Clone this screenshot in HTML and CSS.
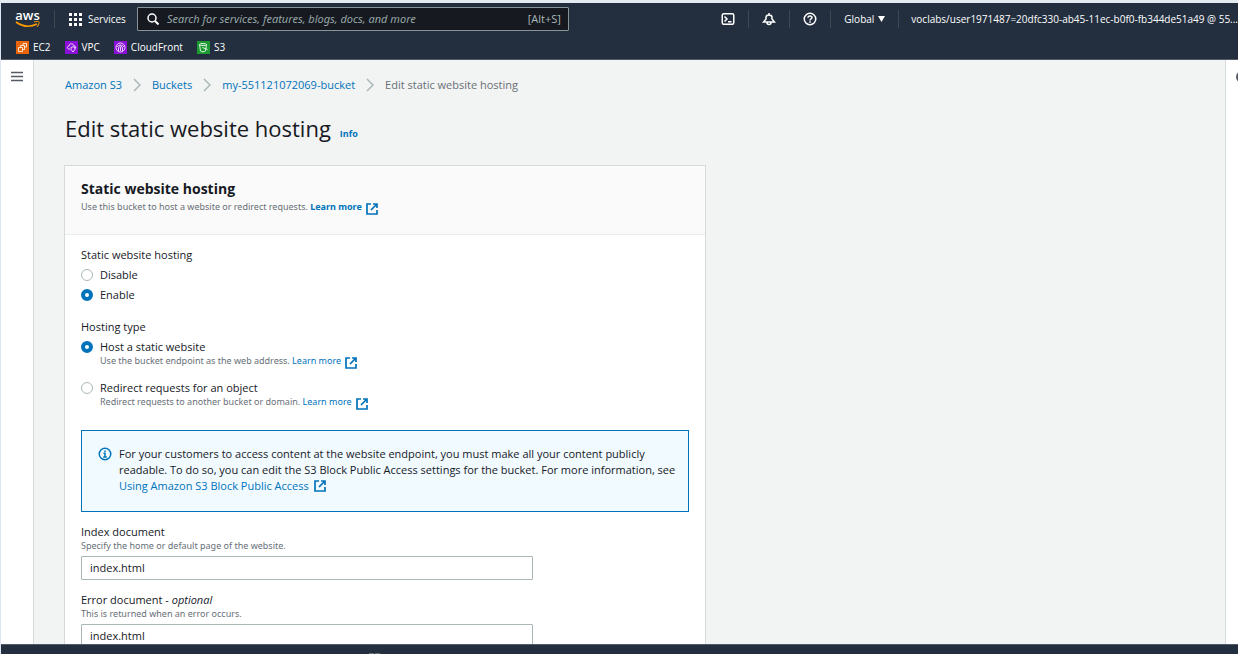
FILE: index.html
```html
<!DOCTYPE html>
<html lang="en">
<head>
<meta charset="utf-8">
<meta name="viewport" content="width=device-width, initial-scale=1">
<title>Edit static website hosting</title>
<link rel="stylesheet" href="styles.css">
</head>
<body>
<svg class="defs" aria-hidden="true">
  <symbol id="external" viewBox="0 0 12 12">
    <path d="M5 1H1v10h10V7M7 1h4v4M11 1 5 7" fill="none" stroke="currentColor" stroke-width="1.700"/>
  </symbol>
  <symbol id="chevron" viewBox="0 0 8 14">
    <path d="M1 1l6 6-6 6" fill="none" stroke="currentColor" stroke-width="1.500"/>
  </symbol>
</svg>
<div class="app">
  <header class="topbar">
    <div class="topbar-row">
      <a class="logo" href="#" aria-label="AWS home">
        <span class="logo-word">aws</span>
        <svg class="logo-smile" viewBox="0 0 26 7"><path d="M1 1c7 5 15 5 21 2" fill="none" stroke="#f90" stroke-width="1.700"/><path d="M19 1c3-1 6-1 5 1 0 1-1 3-2 4" fill="none" stroke="#f90" stroke-width="1"/></svg>
      </a>
      <button class="services" type="button">
        <svg class="icon-grid" viewBox="0 0 13 13" fill="#fff"><path d="M0 0h3v3H0zM5 0h3v3H5zM10 0h3v3h-3zM0 5h3v3H0zM5 5h3v3H5zM10 5h3v3h-3zM0 10h3v3H0zM5 10h3v3H5zM10 10h3v3h-3z"/></svg>
        Services
      </button>
      <div class="search">
        <svg class="icon-search" viewBox="0 0 12 12"><circle cx="5" cy="5" r="4" fill="none" stroke="#fff" stroke-width="1.500"/><path d="M8 8l3.500 3.500" stroke="#fff" stroke-width="2"/></svg>
        <input class="search-input" type="search" aria-label="Search" placeholder="Search for services, features, blogs, docs, and more">
        <span class="search-key">[Alt+S]</span>
      </div>
      <nav class="tools" aria-label="Account">
        <button class="tool" type="button" aria-label="CloudShell"><svg class="icon-tool" viewBox="0 0 14 14" fill="none" stroke="#fff" stroke-width="1.500"><rect x="1.250" y="1.750" width="11.500" height="10.500" rx="1.500"/><path d="M3.500 4.500 6 7 3.500 9.500M7 9.750h3.500"/></svg></button>
        <button class="tool" type="button" aria-label="Notifications"><svg class="icon-tool" viewBox="0 0 14 14" fill="none" stroke="#fff" stroke-width="1.500"><path d="M1.500 10h11L10 7V5.500C10 4 8.500 3 7 3S4 4 4 5.500V7zM7 1v2M5 10.500a2 2 0 0 0 4 0"/></svg></button>
        <button class="tool" type="button" aria-label="Help"><svg class="icon-tool" viewBox="0 0 14 14" fill="none" stroke="#fff" stroke-width="1.500"><circle cx="7" cy="7" r="5.750"/><path d="M5 5.800C5 3.500 9 3.500 9 5.600 9 7 7 6.800 7 8.400M7 9.300v1.400"/></svg></button>
        <button class="tool region" type="button">Global <svg class="caret" viewBox="0 0 7 6"><path d="M0 0h7L3.500 6z" fill="#fff"/></svg></button>
        <button class="tool account" type="button">voclabs/user1971487=20dfc330-ab45-11ec-b0f0-fb344de51a49 @ 55... <svg class="caret" viewBox="0 0 7 6"><path d="M0 0h7L3.500 6z" fill="#fff"/></svg></button>
      </nav>
    </div>
    <nav class="favorites" aria-label="Favorites">
      <a class="favorite" href="#"><svg class="fav ec2" viewBox="0 0 13 13" fill="none" stroke="#fff" stroke-opacity=".8"><path d="M2.500 6.500h4v4h-4zM4.500 6.500v-2h4v4h-2M7 4.500v-2h3.500V6h-2"/></svg>EC2</a>
      <a class="favorite" href="#"><svg class="fav purple" viewBox="0 0 13 13" fill="none" stroke="#fff" stroke-opacity=".8"><path d="M5 8H3.500C1.500 7 2.500 5 4 5c0-3 4.500-3 5 0 2 0 2 2 1 2.500M6 6.500l2-.8 2 .8v2L8 11 6 8.500z"/></svg>VPC</a>
      <a class="favorite" href="#"><svg class="fav purple" viewBox="0 0 13 13" fill="none" stroke="#fff" stroke-opacity=".8"><circle cx="6.500" cy="6.500" r="4.500"/><path d="M3 6c1-2 5-3 7 0M4.500 10V6.500L6.500 5l2 1.500V10M6.500 6v4"/></svg>CloudFront</a>
      <a class="favorite" href="#"><svg class="fav s3" viewBox="0 0 13 13" fill="none" stroke="#fff" stroke-opacity=".85"><ellipse cx="6" cy="3.500" rx="3.500" ry="1"/><path d="M2.500 3.500l1 6.500c1 1 4 1 5 0l1-6.500M5.500 6.500l5 2"/></svg>S3</a>
    </nav>
  </header>
  <div class="body">
    <aside class="rail"><button class="menu" type="button" aria-label="Open navigation"><svg class="icon-menu" viewBox="0 0 12 11"><path d="M0 1.500h12M0 5.500h12M0 9.500h12" stroke="#545b64" stroke-width="1.500"/></svg></button></aside>
    <main class="content">
      <nav class="crumbs" aria-label="Breadcrumb">
        <a href="#">Amazon S3</a><svg class="chevron"><use href="#chevron"/></svg>
        <a href="#">Buckets</a><svg class="chevron"><use href="#chevron"/></svg>
        <a href="#">my-551121072069-bucket</a><svg class="chevron"><use href="#chevron"/></svg>
        <span>Edit static website hosting</span>
      </nav>
      <div class="title"><h1>Edit static website hosting</h1><a class="info" href="#">Info</a></div>
      <form class="card">
        <div class="card-head">
          <h2>Static website hosting</h2>
          <p class="hint">Use this bucket to host a website or redirect requests. <a class="strong" href="#">Learn more <svg class="external low"><use href="#external"/></svg></a></p>
        </div>
        <div class="card-body">
          <fieldset class="group">
            <legend>Static website hosting</legend>
            <div class="option"><input type="radio" name="hosting" id="disable"><label for="disable">Disable</label></div>
            <div class="option"><input type="radio" name="hosting" id="enable" checked><label for="enable">Enable</label></div>
          </fieldset>
          <fieldset class="group types">
            <legend>Hosting type</legend>
            <div class="option"><input type="radio" name="type" id="static" checked><div><label for="static">Host a static website</label><p class="hint">Use the bucket endpoint as the web address. <a href="#">Learn more <svg class="external low"><use href="#external"/></svg></a></p></div></div>
            <div class="option"><input type="radio" name="type" id="redirect"><div><label for="redirect">Redirect requests for an object</label><p class="hint">Redirect requests to another bucket or domain. <a href="#">Learn more <svg class="external low"><use href="#external"/></svg></a></p></div></div>
          </fieldset>
          <div class="alert">
            <svg class="icon-info" viewBox="0 0 14 14" fill="none" stroke="#0073bb" stroke-width="1.500"><circle cx="7" cy="7" r="5.750"/><path d="M7 3.500V5M5.500 6.250H7v3.500M5.250 10h3.500"/></svg>
            <p>For your customers to access content at the website endpoint, you must make all your content publicly readable. To do so, you can edit the S3 Block Public Access settings for the bucket. For more information, see <a href="#">Using Amazon S3 Block Public Access <svg class="external"><use href="#external"/></svg></a></p>
          </div>
          <div class="field">
            <label for="index">Index document</label>
            <p class="hint">Specify the home or default page of the website.</p>
            <input type="text" id="index" value="index.html">
          </div>
          <div class="field">
            <label for="error">Error document - <i>optional</i></label>
            <p class="hint">This is returned when an error occurs.</p>
            <input type="text" id="error" value="index.html">
          </div>
        </div>
      </form>
    </main>
    <aside class="help"><button class="menu" type="button" aria-label="Open help panel"><svg class="icon-help" viewBox="0 0 12 12"><circle cx="6" cy="6" r="5" fill="none" stroke="#545b64" stroke-width="2"/></svg></button></aside>
  </div>
  <footer class="bottombar"><svg class="grip" viewBox="0 0 11 1"><path d="M0 0h5v1H0zM6 0h5v1H6z" fill="#687078"/></svg></footer>
</div>
</body>
</html>
```

FILE: styles.css
```css
* { box-sizing: border-box; }
body {
  margin: 0;
  font: 11px/16px "Open Sans", "Noto Sans", sans-serif;
  color: #16191f;
}
h1, h2, p, fieldset, legend { margin: 0; padding: 0; border: 0; font-weight: 400; }
a { color: #0073bb; text-decoration: none; }
button { font: inherit; color: inherit; background: none; border: 0; padding: 0; }
.defs { position: absolute; width: 0; height: 0; }

.app {
  display: flex;
  flex-direction: column;
  height: 100vh;
  overflow: hidden;
  border-left: 1px solid #dce6f2;
}
.topbar {
  flex: none;
  background: #232f3e;
  color: #fff;
  border-top: 3px solid #e4eaf0;
  border-bottom: 1px solid #545b64;
}
.topbar-row { display: flex; align-items: center; height: 32px; overflow: hidden; }
.logo {
  display: flex;
  flex-direction: column;
  align-items: center;
  width: 54px;
  height: 18px;
  border-right: 1px solid #414750;
  color: #fff;
}
.logo-word { font: 600 13px/11px "Open Sans", sans-serif; }
.logo-smile { width: 26px; height: 7px; flex: none; }
.services { display: flex; align-items: center; gap: 6px; padding: 0 11px 0 14px; font-size: 10px; }
.icon-grid { width: 13px; height: 13px; }
.search {
  display: flex;
  align-items: center;
  flex: 0 1 432px;
  height: 24px;
  padding: 0 7px 0 9px;
  gap: 8px;
  background: #16191f;
  border: 1px solid #879596;
  border-radius: 1px;
  color: #aab7b8;
}
.icon-search { width: 12px; height: 12px; flex: none; }
.search-input { flex: 1; min-width: 0; padding: 0; border: 0; outline: 0; background: none; color: #fff; font: 11px/16px "Noto Sans", sans-serif; }
.search-input::placeholder { color: #95a5a6; font-style: italic; opacity: 1; }
.tools { display: flex; flex: none; align-items: center; margin-left: auto; margin-right: -10px; font-size: 10px; }
.tool { display: flex; align-items: center; height: 18px; padding: 0 13px; border-left: 1px solid #414750; white-space: nowrap; }
.tool:first-child { border-left: 0; }
.icon-tool { width: 14px; height: 14px; }
.caret { width: 7px; height: 6px; margin-left: 4px; }
.region { padding: 0 13px; }
.account { padding: 0 0 0 12px; }
.account .caret { margin-left: 3px; }
.favorites { display: flex; align-items: center; gap: 14px; height: 24px; padding-left: 15px; font-size: 10px; }
.favorite { display: flex; align-items: center; gap: 4px; color: #fff; }
.fav { width: 13px; height: 13px; }
.ec2 { background: #e8650a; }
.purple { background: #8a0fd8; }
.s3 { background: #1b9a2f; }

.body { display: flex; flex: 1; min-height: 0; overflow: hidden; background: #f2f3f3; }
.rail { flex: 0 0 33px; background: #fff; border-right: 1px solid #d5dbdb; text-align: center; }
.menu { display: block; margin: 11px auto 0 10px; }
.icon-menu { display: block; width: 12px; height: 11px; }
.icon-help { display: block; width: 12px; height: 12px; }
.help { flex: 0 0 13px; background: #fff; border-left: 1px solid #d5dbdb; overflow: hidden; }
.content { flex: 1; min-width: 0; padding: 17px 30px 0; overflow: hidden; }
.crumbs { display: flex; align-items: center; padding-left: 1px; color: #687078; }
.chevron { width: 8px; height: 14px; margin: 0 11px; color: #aab7b8; }
.title { display: flex; align-items: baseline; gap: 9px; margin: 19px 0 21px; padding-left: 1px; }
h1 { font-size: 22px; line-height: 32px; }
.info { font-size: 9px; font-weight: 700; }
.card { max-width: 642px; background: #fff; border: 1px solid #d5dbdb; }
.card-head { height: 69px; padding: 14px 16px; background: #fafafa; border-bottom: 1px solid #eaeded; }
h2 { font-size: 14px; line-height: 18px; font-weight: 700; }
.hint { font: 9px/12px "Noto Sans", sans-serif; color: #687078; }
.card-head .hint { margin-top: 3px; }
.strong { font-weight: 700; }
.external { width: 12px; height: 12px; margin-left: 2px; vertical-align: -2px; }
.low { margin-top: -4px; margin-bottom: -4px; vertical-align: -1px; }
.card-body { padding: 12px 16px; }
.group { margin-bottom: 16px; }
.option { display: flex; align-items: flex-start; gap: 7px; margin-top: 4px; }
.option label { display: block; }
.types .option + .option { margin-top: 13px; }
.option input {
  appearance: none;
  flex: none;
  width: 12px;
  height: 12px;
  margin: 2px 0 0;
  border: 1px solid #aab7b8;
  border-radius: 50%;
  background: #fff;
}
.option input:checked { border: 4px solid #0073bb; }
.alert {
  display: flex;
  align-items: flex-start;
  gap: 7px;
  min-height: 82px;
  margin: 22px 0 12px;
  padding: 15px 8px 15px 16px;
  background: #f1faff;
  border: 1px solid #0073bb;
}
.icon-info { flex: none; width: 14px; height: 14px; margin-top: 1px; }
.field { max-width: 452px; margin-bottom: 12px; }
.field label { display: block; }
.field input { display: block; width: 100%; height: 24px; margin-top: 4px; padding: 0 8px 2px; border: 1px solid #aab7b8; border-radius: 1px; font: inherit; color: inherit; }
.bottombar { display: flex; align-items: flex-end; flex: none; height: 10px; padding-left: 368px; background: #232f3e; border-top: 1px solid #545b64; }
.grip { width: 11px; height: 1px; }
```
